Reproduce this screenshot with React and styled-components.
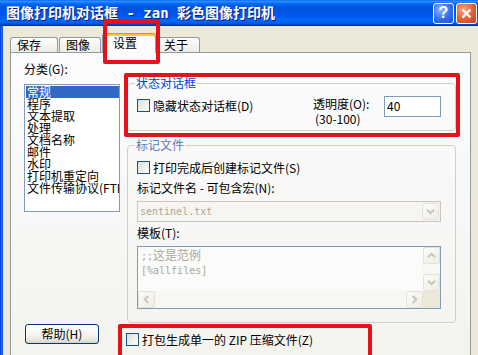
import React from 'react';
import styled, { createGlobalStyle } from 'styled-components';

const FONT = `"Noto Sans CJK SC", "Noto Sans", sans-serif`;
const MONO = `"DejaVu Sans Mono", "Liberation Mono", monospace`;

const GlobalStyle = createGlobalStyle`
  html, body { margin: 0; padding: 0; background: #ECE9D8; }
  body { font-family: ${FONT}; font-size: 12px; }
  *, *::before, *::after { box-sizing: border-box; }
`;

const Screen = styled.div`
  position: relative;
  width: 478px;
  height: 355px;
  overflow: hidden;
  display: flex;
  flex-direction: column;
  background: #ECE9D8;
  font-family: ${FONT};
  font-size: 12px;
  color: #000;
`;

const TitleBar = styled.div`
  height: 26px;
  flex: none;
  display: flex;
  align-items: center;
  padding: 0 1px 0 6px;
  background: linear-gradient(
    to bottom,
    #0058ee 0%,
    #3593ff 4%,
    #288eff 7%,
    #127dff 10%,
    #036ffc 13%,
    #0262ee 18%,
    #0057e5 24%,
    #0054e3 30%,
    #0055eb 56%,
    #005bf5 66%,
    #026afe 76%,
    #0062ef 86%,
    #0052d6 92%,
    #0040ab 96%,
    #003092 100%
  );
`;

const TitleText = styled.div`
  flex: 1;
  color: #fff;
  font-family: "DejaVu Sans Mono", ${FONT};
  font-weight: bold;
  font-size: 14px;
  line-height: 14px;
  white-space: nowrap;
  text-shadow: 1px 1px 0 #0a1a7a;
`;

const CaptionButton = styled.div`
  width: 21px;
  height: 21px;
  flex: none;
  border: 1px solid #fff;
  border-radius: 3px;
  display: flex;
  align-items: center;
  justify-content: center;
  color: #fff;
  font-family: "Liberation Sans", Arial, sans-serif;
  font-weight: bold;
  font-size: 16px;
  line-height: 16px;
  background: ${(p) =>
    p.$close
      ? 'radial-gradient(circle at 35% 30%, #f4a68a 0%, #e35d33 55%, #c4411f 100%)'
      : 'radial-gradient(circle at 35% 30%, #8fb6ff 0%, #2f6df0 55%, #1c4fd6 100%)'};
  & + & {
    margin-left: 2px;
  }
`;

const Frame = styled.div`
  flex: 1;
  display: flex;
  min-height: 0;
`;

const FrameEdge = styled.div`
  width: 3px;
  flex: none;
  background: linear-gradient(to right, #0831d9, #166aee 50%, #0855dd);
`;

const Client = styled.div`
  flex: 1;
  min-width: 0;
  display: flex;
  flex-direction: column;
  padding: 0 7px;
`;

const TabStrip = styled.div`
  height: 26px;
  flex: none;
  display: flex;
  align-items: flex-end;
  gap: 1px;
  position: relative;
  z-index: 1;
`;

const Tab = styled.div`
  width: ${(p) => p.$w}px;
  height: ${(p) => (p.$active ? 20 : 15)}px;
  margin-bottom: ${(p) => (p.$active ? -1 : 0)}px;
  padding: 0 0 ${(p) => (p.$active ? 2 : 0)}px ${(p) => (p.$active ? 10 : 6)}px;
  display: flex;
  align-items: center;
  line-height: 12px;
  white-space: nowrap;
  border: 1px solid #919b9c;
  border-bottom: none;
  border-top-color: ${(p) => (p.$active ? '#e68b2c' : '#919b9c')};
  border-radius: 3px 3px 0 0;
  box-shadow: ${(p) => (p.$active ? 'inset 0 2px 0 #ffc73c' : 'none')};
  background: ${(p) => (p.$active ? '#fcfcfe' : 'linear-gradient(#ffffff, #ecebe6)')};
`;

const Panel = styled.div`
  flex: 1;
  min-height: 0;
  border: 1px solid #919b9c;
  border-bottom: none;
  background: linear-gradient(#fcfcfe, #f4f3ee);
`;

const PanelGrid = styled.div`
  display: grid;
  grid-template-columns: 96px 329px;
  column-gap: 7px;
  align-items: start;
  padding: 10px 0 0 13px;
`;

const Column = styled.div`
  display: flex;
  flex-direction: column;
  min-width: 0;
  margin-top: ${(p) => p.$mt || 0}px;
`;

const Label = styled.div`
  height: 12px;
  line-height: 12px;
  white-space: nowrap;
  margin-top: ${(p) => p.$mt || 0}px;
  padding-left: ${(p) => p.$pl || 0}px;
`;

const ListBox = styled.div`
  margin-top: 9px;
  height: 128px;
  border: 1px solid #7f9db9;
  background: #fff;
  padding: 1px 0 0 1px;
  overflow: hidden;
`;

const ListItem = styled.div`
  height: 12px;
  line-height: 12px;
  padding-left: 1px;
  white-space: nowrap;
  background: ${(p) => (p.$selected ? '#316ac5' : 'transparent')};
  color: ${(p) => (p.$selected ? '#fff' : '#000')};
`;

const Group = styled.fieldset`
  margin: ${(p) => p.$mt || 0}px 0 0 0;
  padding: 0;
  min-width: 0;
  border: 1px solid #d0d0bf;
  border-radius: 4px;
`;

const Caption = styled.legend`
  margin-left: 7px;
  padding: 0 1px;
  font-size: 12px;
  line-height: 12px;
  color: ${(p) => (p.$muted ? '#5f77b8' : '#0046d5')};
`;

const StatusRow = styled.div`
  height: 41px;
  display: flex;
  align-items: flex-start;
  padding: 0 14px 0 9px;
`;

const CheckRow = styled.div`
  display: flex;
  align-items: center;
  gap: 3px;
  height: 13px;
  line-height: 12px;
  white-space: nowrap;
  margin-top: ${(p) => p.$mt || 0}px;
  margin-left: ${(p) => p.$ml || 0}px;
`;

const CheckBox = styled.span`
  width: 13px;
  height: 13px;
  flex: none;
  border: 1px solid #1c5180;
  background: linear-gradient(135deg, #dcdcd7, #ffffff);
`;

const OpacityLabel = styled.div`
  margin-left: auto;
  margin-top: 9px;
  width: 71px;
  display: flex;
  flex-direction: column;
  gap: 3px;
`;

const TextInput = styled.div`
  width: 57px;
  height: 21px;
  margin-top: 7px;
  border: 1px solid #7f9db9;
  background: #fff;
  padding-left: 2px;
  line-height: 18px;
`;

const MarkerBody = styled.div`
  display: flex;
  flex-direction: column;
  padding: 0 0 13px 9px;
`;

const Combo = styled.div`
  width: 304px;
  height: 21px;
  margin-top: 7px;
  display: flex;
  align-items: center;
  border: 1px solid #c9c7ba;
  background: #f6f5f1;
`;

const ComboText = styled.div`
  flex: 1;
  padding-left: 2px;
  font-family: ${MONO};
  font-size: 10px;
  color: #aca899;
`;

const ArrowButton = styled.div`
  width: 17px;
  height: 17px;
  flex: none;
  margin-right: ${(p) => p.$mr || 0}px;
  display: flex;
  align-items: center;
  justify-content: center;
  border: 1px solid #e4e2d8;
  border-radius: 2px;
  background: linear-gradient(135deg, #fbfbf8, #eeede6);
`;

const Memo = styled.div`
  width: 304px;
  height: 63px;
  margin-top: 7px;
  border: 1px solid #7f9db9;
  background: #fbfbf9;
  display: grid;
  grid-template-columns: 1fr 17px;
  grid-template-rows: 1fr 17px;
`;

const MemoText = styled.div`
  padding: 2px 0 0 3px;
  color: #aca899;
  line-height: 12px;
  white-space: nowrap;
  overflow: hidden;
`;

const Mono = styled.span`
  font-family: ${MONO};
  font-size: 10px;
`;

const ScrollBar = styled.div`
  display: flex;
  flex-direction: ${(p) => (p.$horizontal ? 'row' : 'column')};
  justify-content: space-between;
  background: #f8f7f3;
`;

const Corner = styled.div`
  background: #ece9d8;
`;

const PushButton = styled.div`
  width: 74px;
  height: 20px;
  margin: 1px 0 0 1px;
  display: flex;
  align-items: center;
  justify-content: center;
  line-height: 12px;
  border: 1px solid #003c74;
  border-radius: 3px;
  background: linear-gradient(#ffffff, #f4f4f0 55%, #e6e4dc 85%, #d6d0c5);
`;

const Callout = styled.div`
  position: absolute;
  left: ${(p) => p.$x}px;
  top: ${(p) => p.$y}px;
  width: ${(p) => p.$w}px;
  height: ${(p) => p.$h}px;
  border: 4px solid #e3121b;
  border-radius: 2px;
  pointer-events: none;
  z-index: 5;
`;

const ROT = { up: 0, right: 90, down: 180, left: 270 };

function Chevron({ dir = 'down', color = '#c9c7ba' }) {
  return (
    <svg width="9" height="9" viewBox="0 0 9 9" style={{ transform: `rotate(${ROT[dir]}deg)` }}>
      <path d="M1 6.2 L4.5 2.7 L8 6.2" fill="none" stroke={color} strokeWidth="2" />
    </svg>
  );
}

const categories = [
  '常规',
  '程序',
  '文本提取',
  '处理',
  '文档名称',
  '邮件',
  '水印',
  '打印机重定向',
  '文件传输协议(FTP)',
];

export default function App() {
  return (
    <>
      <GlobalStyle />
      <Screen>
        <TitleBar>
          <TitleText>图像打印机对话框 - zan 彩色图像打印机</TitleText>
          <CaptionButton>?</CaptionButton>
          <CaptionButton $close>
            <svg width="11" height="11" viewBox="0 0 11 11">
              <path d="M1.5 1.5 L9.5 9.5 M9.5 1.5 L1.5 9.5" stroke="#fff" strokeWidth="2.2" />
            </svg>
          </CaptionButton>
        </TitleBar>
        <Frame>
          <FrameEdge />
          <Client>
            <TabStrip>
              <Tab $w={48}>保存</Tab>
              <Tab $w={42}>图像</Tab>
              <Tab $w={54} $active>设置</Tab>
              <Tab $w={43}>关于</Tab>
            </TabStrip>
            <Panel>
              <PanelGrid>
                <Column>
                  <Label>分类(G):</Label>
                  <ListBox>
                    {categories.map((c, i) => (
                      <ListItem key={c} $selected={i === 0}>
                        {c}
                      </ListItem>
                    ))}
                  </ListBox>
                </Column>
                <Column $mt={14}>
                  <Group>
                    <Caption>状态对话框</Caption>
                    <StatusRow>
                      <CheckRow $mt={10}>
                        <CheckBox />
                        隐藏状态对话框(D)
                      </CheckRow>
                      <OpacityLabel>
                        <Label>透明度(O):</Label>
                        <Label $pl={2}>(30-100)</Label>
                      </OpacityLabel>
                      <TextInput>40</TextInput>
                    </StatusRow>
                  </Group>
                  <Group $mt={8}>
                    <Caption $muted>标记文件</Caption>
                    <MarkerBody>
                      <CheckRow $mt={10}>
                        <CheckBox />
                        打印完成后创建标记文件(S)
                      </CheckRow>
                      <Label $mt={8}>标记文件名 - 可包含宏(N):</Label>
                      <Combo>
                        <ComboText>sentinel.txt</ComboText>
                        <ArrowButton $mr={1}>
                          <Chevron dir="down" />
                        </ArrowButton>
                      </Combo>
                      <Label $mt={5}>模板(T):</Label>
                      <Memo>
                        <MemoText>
                          <div>
                            <Mono>;;</Mono>这是范例
                          </div>
                          <div>
                            <Mono>[%allfiles]</Mono>
                          </div>
                        </MemoText>
                        <ScrollBar>
                          <ArrowButton>
                            <Chevron dir="up" />
                          </ArrowButton>
                          <ArrowButton>
                            <Chevron dir="down" />
                          </ArrowButton>
                        </ScrollBar>
                        <ScrollBar $horizontal>
                          <ArrowButton>
                            <Chevron dir="left" />
                          </ArrowButton>
                          <ArrowButton>
                            <Chevron dir="right" />
                          </ArrowButton>
                        </ScrollBar>
                        <Corner />
                      </Memo>
                    </MarkerBody>
                  </Group>
                </Column>
                <PushButton>帮助(H)</PushButton>
                <CheckRow $mt={10} $ml={-1}>
                  <CheckBox />
                  打包生成单一的 ZIP 压缩文件(Z)
                </CheckRow>
              </PanelGrid>
            </Panel>
          </Client>
        </Frame>
        <Callout $x={103} $y={19} $w={57} $h={45} />
        <Callout $x={124} $y={73} $w={336} $h={64} />
        <Callout $x={118} $y={324} $w={254} $h={40} />
      </Screen>
    </>
  );
}
